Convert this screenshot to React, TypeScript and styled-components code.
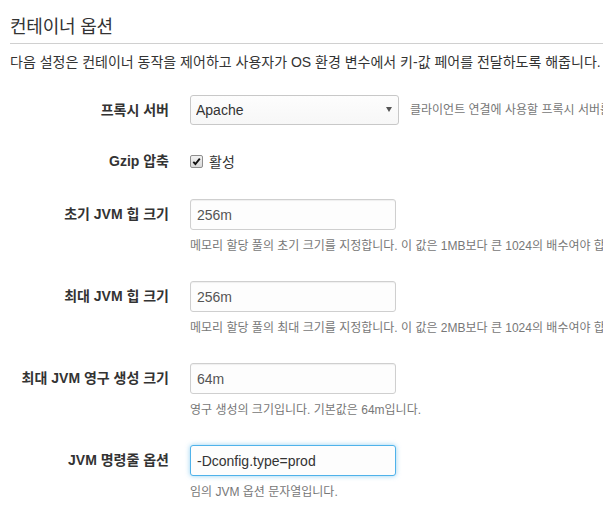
import React from "react";
import styled, { createGlobalStyle } from "styled-components";

const GlobalStyle = createGlobalStyle`
  html, body {
    margin: 0;
    padding: 0;
    background: #fff;
    overflow: hidden;
  }
  body {
    font-family: "Liberation Sans", "Noto Sans CJK KR", sans-serif;
    color: #333;
  }
`;

const Page = styled.div`
  padding-left: 10px;
  width: 593px;
`;

const Title = styled.h2`
  margin: 15px 0 0;
  padding-bottom: 4px;
  font-size: 18px;
  font-weight: normal;
  line-height: 24px;
  letter-spacing: -0.2px;
  color: #333;
  border-bottom: 1px solid #d0d0d0;
`;

const Intro = styled.p`
  margin: 8px 0 0;
  font-size: 14px;
  line-height: 20px;
  white-space: nowrap;
  color: #333;
`;

const Form = styled.div`
  margin-top: 23px;
`;

const Group = styled.div<{ $gap: number }>`
  display: grid;
  grid-template-columns: 159px 1fr;
  column-gap: 21px;
  align-items: start;
  margin-bottom: ${(p) => p.$gap}px;
`;

const Label = styled.label<{ $h: number }>`
  text-align: right;
  font-size: 14px;
  font-weight: bold;
  line-height: ${(p) => p.$h}px;
  white-space: nowrap;
  color: #333;
`;

const Control = styled.div`
  min-width: 0;
`;

const InlineRow = styled.div`
  display: flex;
  align-items: center;
  gap: 11px;
`;

const SelectWrap = styled.div`
  position: relative;
  flex: none;
  &::after {
    content: "";
    position: absolute;
    right: 7px;
    top: 12px;
    border-left: 3px solid transparent;
    border-right: 3px solid transparent;
    border-top: 5px solid #555;
    pointer-events: none;
  }
`;

const Select = styled.select`
  appearance: none;
  display: block;
  box-sizing: border-box;
  width: 209px;
  height: 30px;
  padding: 0 20px 0 5px;
  font-family: "Liberation Sans", "Noto Sans CJK KR", sans-serif;
  font-size: 14px;
  color: #333;
  background: linear-gradient(#fdfdfd, #f7f7f7);
  border: 1px solid #c8c8c8;
  border-radius: 3px;
  outline: none;
`;

const Input = styled.input<{ $focused?: boolean }>`
  display: block;
  box-sizing: border-box;
  width: 206px;
  height: 31px;
  padding: 0 6px;
  font-family: "Liberation Sans", "Noto Sans CJK KR", sans-serif;
  font-size: 14px;
  color: ${(p) => (p.$focused ? "#333" : "#555")};
  background: #fdfdfd;
  border: 1px solid ${(p) => (p.$focused ? "#4fb2ea" : "#cfcfcf")};
  border-radius: 3px;
  box-shadow: ${(p) =>
    p.$focused
      ? "0 0 5px rgba(79, 178, 234, 0.6)"
      : "inset 0 1px 1px rgba(0, 0, 0, 0.06)"};
  outline: none;
`;

const Help = styled.div<{ $inline?: boolean }>`
  margin-top: ${(p) => (p.$inline ? 0 : 7)}px;
  font-size: 12px;
  line-height: 18px;
  color: #777;
  white-space: nowrap;
`;

const CheckRow = styled.label`
  display: flex;
  align-items: center;
  gap: 6px;
  height: 30px;
  font-size: 14px;
  color: #333;
`;

const CheckBox = styled.span`
  box-sizing: border-box;
  width: 13px;
  height: 13px;
  border: 1px solid #8e8e8e;
  border-radius: 2px;
  background: linear-gradient(#f2f2f2, #d9d9d9);
  display: flex;
  align-items: center;
  justify-content: center;
`;

type FieldProps = {
  label: string;
  value: string;
  help: string;
  focused?: boolean;
};

const Field = ({ label, value, help, focused }: FieldProps) => (
  <Group $gap={26}>
    <Label $h={31}>{label}</Label>
    <Control>
      <Input defaultValue={value} $focused={focused} spellCheck={false} />
      <Help>{help}</Help>
    </Control>
  </Group>
);

const fields: FieldProps[] = [
  {
    label: "초기 JVM 힙 크기",
    value: "256m",
    help: "메모리 할당 풀의 초기 크기를 지정합니다. 이 값은 1MB보다 큰 1024의 배수여야 합니다.",
  },
  {
    label: "최대 JVM 힙 크기",
    value: "256m",
    help: "메모리 할당 풀의 최대 크기를 지정합니다. 이 값은 2MB보다 큰 1024의 배수여야 합니다.",
  },
  {
    label: "최대 JVM 영구 생성 크기",
    value: "64m",
    help: "영구 생성의 크기입니다. 기본값은 64m입니다.",
  },
  {
    label: "JVM 명령줄 옵션",
    value: "-Dconfig.type=prod",
    help: "임의 JVM 옵션 문자열입니다.",
    focused: true,
  },
];

export default function App() {
  return (
    <Page>
      <GlobalStyle />
      <Title>컨테이너 옵션</Title>
      <Intro>
        다음 설정은 컨테이너 동작을 제어하고 사용자가 OS 환경 변수에서 키-값 페어를 전달하도록 해줍니다.
      </Intro>
      <Form>
        <Group $gap={21}>
          <Label $h={30}>프록시 서버</Label>
          <InlineRow>
            <SelectWrap>
              <Select defaultValue="apache">
                <option value="apache">Apache</option>
                <option value="nginx">Nginx</option>
                <option value="none">없음</option>
              </Select>
            </SelectWrap>
            <Help $inline>클라이언트 연결에 사용할 프록시 서버를 선택합니다.</Help>
          </InlineRow>
        </Group>
        <Group $gap={23}>
          <Label $h={30}>Gzip 압축</Label>
          <CheckRow>
            <CheckBox>
              <svg width="9" height="9" viewBox="0 0 9 9">
                <path d="M1.3 4.8 L3.4 7 L7.8 1.6" fill="none" stroke="#111" strokeWidth="1.9" />
              </svg>
            </CheckBox>
            활성
          </CheckRow>
        </Group>
        {fields.map((f) => (
          <Field key={f.label} {...f} />
        ))}
      </Form>
    </Page>
  );
}
